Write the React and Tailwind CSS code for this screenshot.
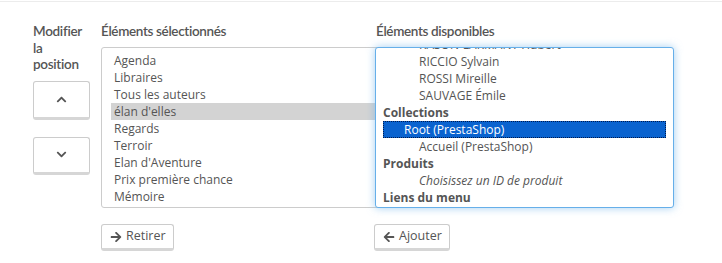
import React from 'react';
import { FaArrowRight, FaArrowLeft, FaChevronUp, FaChevronDown } from 'react-icons/fa';

const selected = ['Agenda', 'Libraires', 'Tous les auteurs', "élan d'elles", 'Regards', 'Terroir', "Elan d'Aventure", 'Prix première chance', 'Mémoire'];

const available = [
  { label: 'RASON-LARMANT Hubert', level: 2 },
  { label: 'RICCIO Sylvain', level: 2 },
  { label: 'ROSSI Mireille', level: 2 },
  { label: 'SAUVAGE Émile', level: 2 },
  { label: 'Collections', group: true },
  { label: 'Root (PrestaShop)', level: 1, active: true },
  { label: 'Accueil (PrestaShop)', level: 2 },
  { label: 'Produits', group: true },
  { label: 'Choisissez un ID de produit', level: 2, italic: true },
  { label: 'Liens du menu', group: true },
];

const heading = 'font-["Lato",sans-serif] text-[13.5px] font-semibold tracking-[-0.35px] text-[#555] leading-[17px]';
const btn = 'bg-white border border-[#ccc] border-b-[3px] border-b-[#d6d6d6] rounded-[3px] text-[#555]';

const App = () => {
  return (
    <div className="w-[722px] h-[263px] bg-white font-['Open_Sans',sans-serif] text-[#555] overflow-hidden">
      <div className="mt-px h-px bg-[#ececec]" />
      <div className="flex pl-[33px] pt-[21px]">
        {/* Position buttons */}
        <div className="w-[68px] flex flex-col">
          <div className="font-['Lato',sans-serif] text-[13.5px] font-semibold tracking-[-0.3px] leading-[16.5px]">Modifier<br />la<br />position</div>
          <button className={`${btn} mt-[8px] w-[57px] h-[39px] flex items-center justify-center`}>
            <FaChevronUp className="w-[11px] h-[11px] text-[#555]" />
          </button>
          <button className={`${btn} mt-[17px] w-[57px] h-[38px] flex items-center justify-center`}>
            <FaChevronDown className="w-[11px] h-[11px] text-[#555]" />
          </button>
        </div>

        {/* Selected items */}
        <div className="w-[274px] flex flex-col">
          <div className={heading}>Éléments sélectionnés</div>
          <div className="mt-[7px] w-[280px] h-[161px] border border-[#ccc] rounded-[3px] pt-[4px] pl-[9px] text-[12px] leading-[17px] overflow-hidden">
            {selected.map((s) => (
              <div key={s} className={`pl-[3px] h-[17px] ${s === "élan d'elles" ? 'bg-[#d3d3d3]' : ''}`}>{s}</div>
            ))}
          </div>
          <div className="mt-[16px]">
            <button className={`${btn} h-[27px] pl-[8px] pr-[7px] flex items-center gap-[4px] text-[12.5px]`}>
              <FaArrowRight className="w-[12px] h-[12px]" />
              Retirer
            </button>
          </div>
        </div>

        {/* Available items */}
        <div className="w-[299px] flex flex-col relative z-10">
          <div className={`${heading} pl-px`}>Éléments disponibles</div>
          <div className="mt-[7px] h-[161px] bg-white border border-[#66afe9] rounded-[3px] shadow-[0_0_8px_rgba(102,175,233,0.6)] overflow-hidden text-[12px] leading-[17px]">
            <div className="-mt-[12px] pl-[7px] pr-[7px]">
              {available.map((a) => (
                <div
                  key={a.label}
                  className={`h-[17px] whitespace-nowrap ${a.group ? 'font-bold' : ''} ${a.italic ? 'italic' : ''} ${
                    a.active ? 'bg-[#0a63cf] text-white outline outline-1 outline-dotted outline-[#001a4d] -outline-offset-1' : ''
                  } ${a.level === 1 ? 'pl-[21px]' : a.level === 2 ? 'pl-[36px]' : ''}`}
                >
                  {a.label}
                </div>
              ))}
            </div>
          </div>
          <div className="mt-[16px] -ml-px">
            <button className={`${btn} h-[27px] pl-[8px] pr-[7px] flex items-center gap-[4px] text-[12.5px]`}>
              <FaArrowLeft className="w-[12px] h-[12px]" />
              Ajouter
            </button>
          </div>
        </div>
      </div>
    </div>
  );
};

export default App;
